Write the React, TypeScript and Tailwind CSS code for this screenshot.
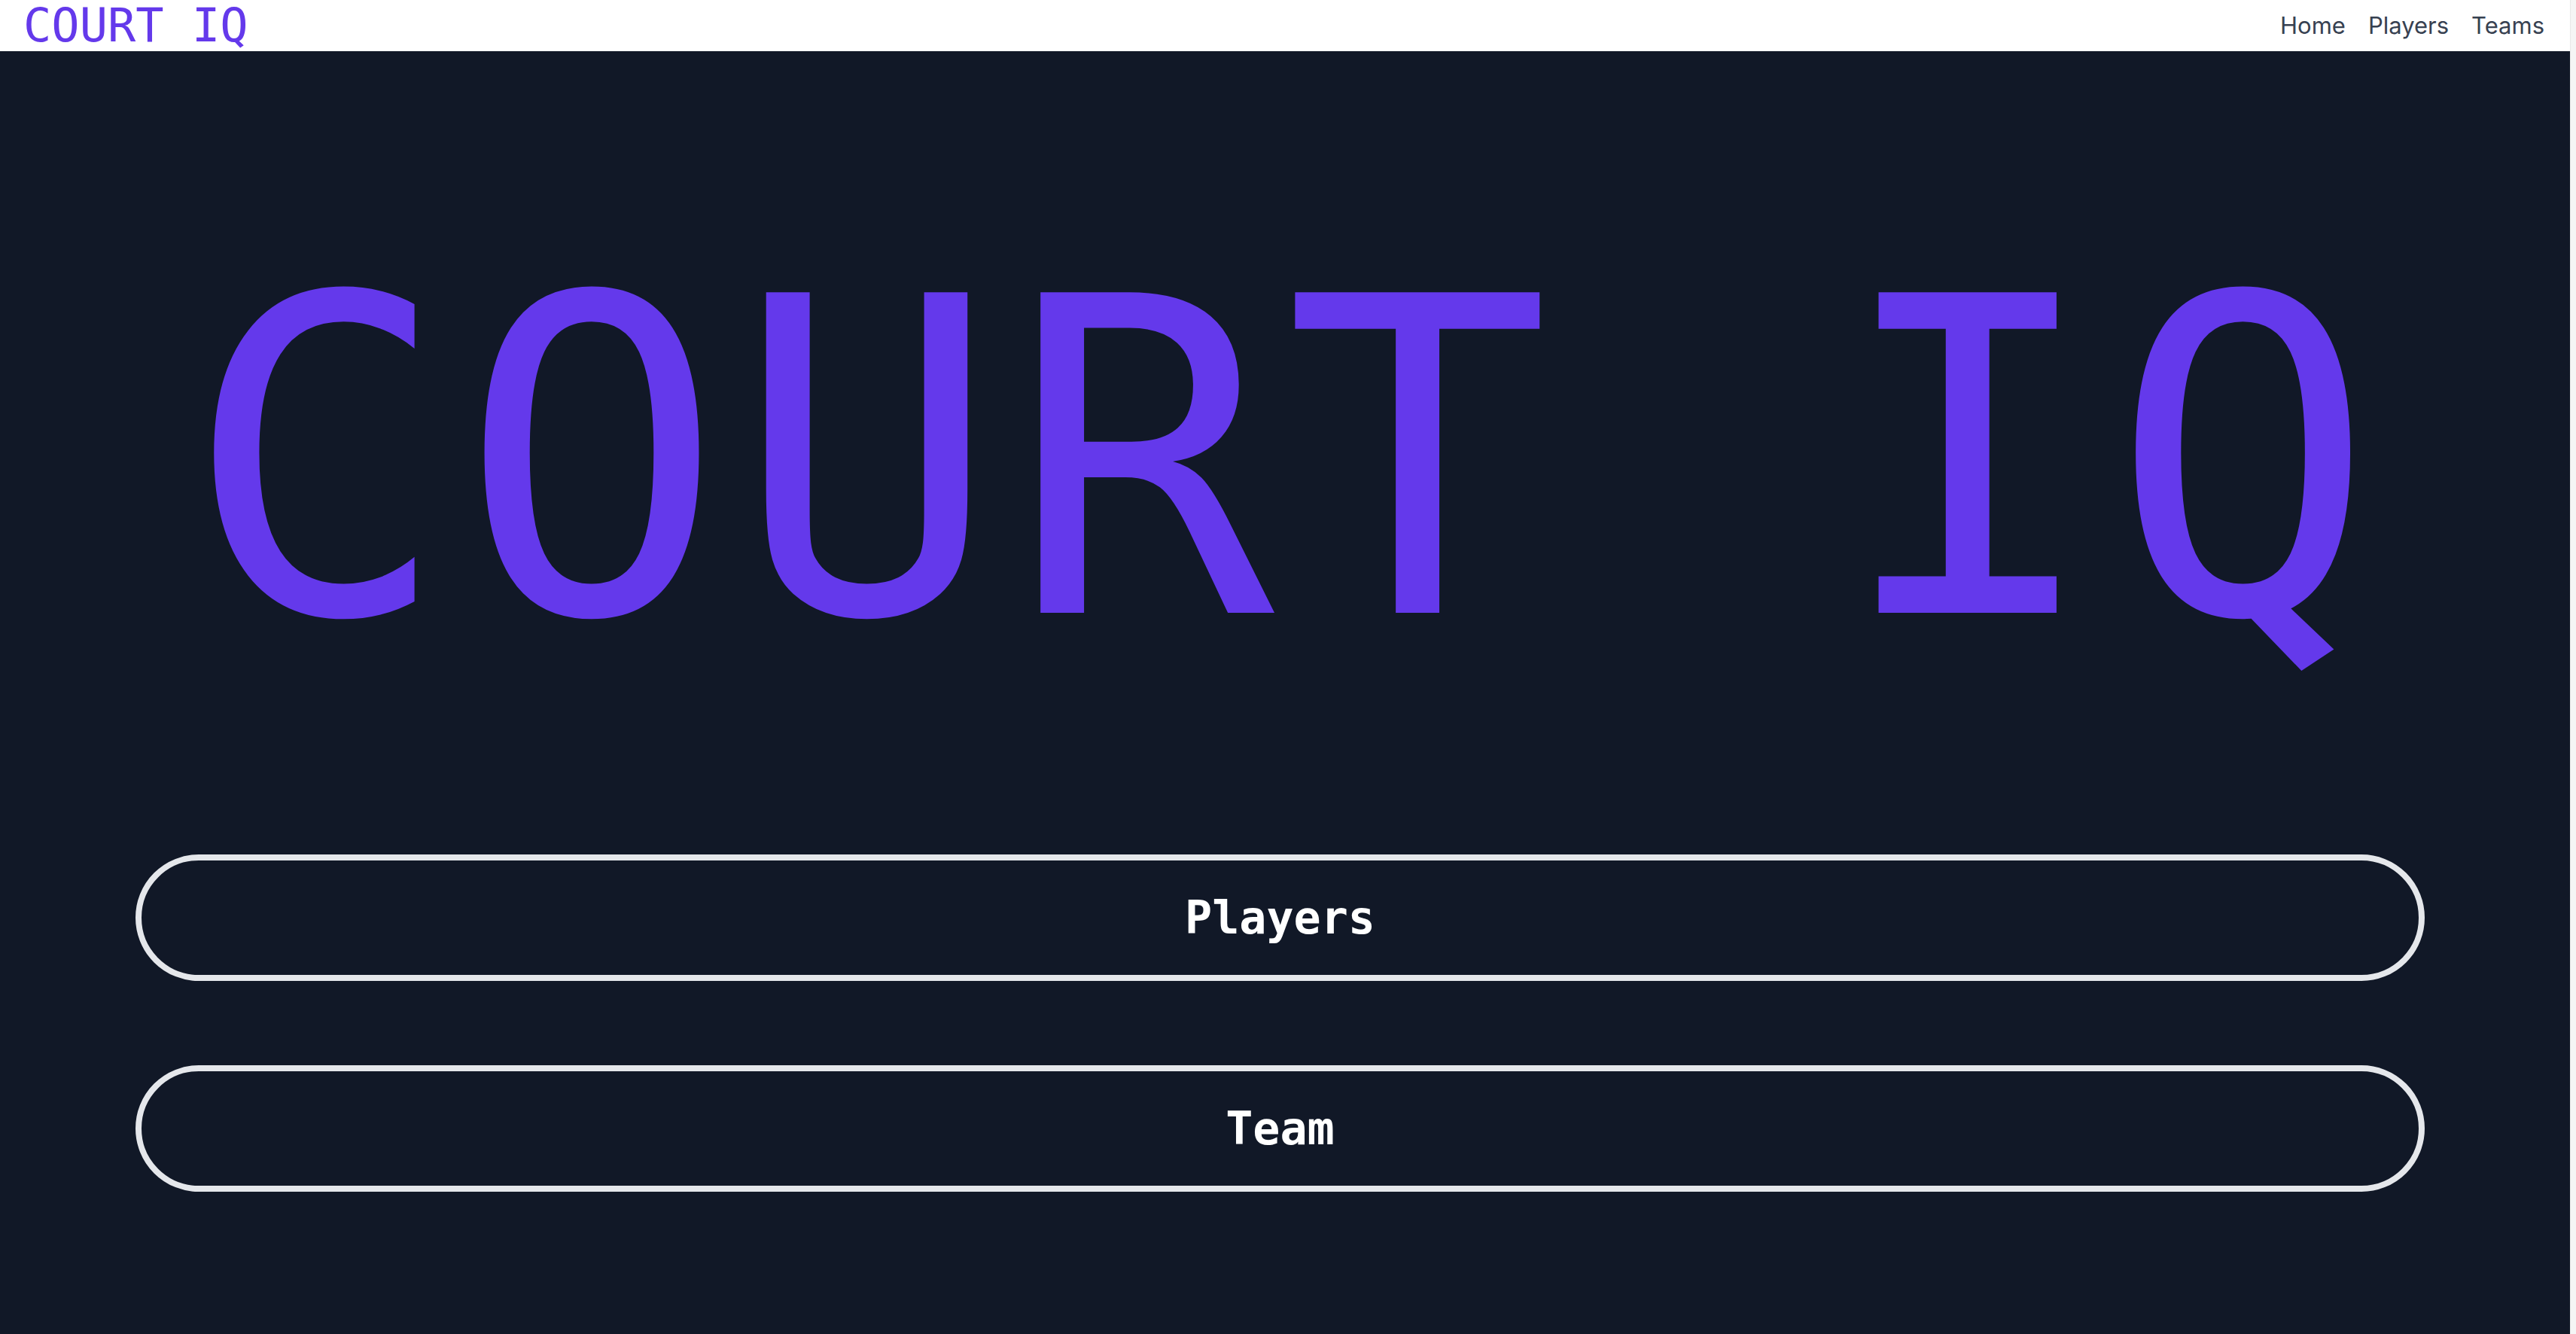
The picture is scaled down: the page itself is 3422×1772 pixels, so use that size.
import React from "react";

const navItems = ["Home", "Players", "Teams"];

const mono = "font-['DejaVu_Sans_Mono','Liberation_Mono',monospace]";

const Header = () => (
  <header className="h-[68px] bg-white flex items-center justify-between pl-[31px] pr-[34px]">
    <a href="#home" className={`${mono} text-[62px] leading-none text-[#6439eb]`}>
      COURT IQ
    </a>
    <nav className="flex items-center gap-[30px] font-['Inter','Noto_Sans',sans-serif] text-[31px] text-[#374151]">
      {navItems.map((item) => (
        <a key={item} href={`#${item.toLowerCase()}`}>
          {item}
        </a>
      ))}
    </nav>
  </header>
);

const BigButton = ({ label }: { label: string }) => (
  <button
    type="button"
    className={`${mono} h-[168px] w-full rounded-full border-[8px] border-[#e5e7eb] bg-transparent text-[60px] font-bold text-white`}
  >
    {label}
  </button>
);

export default function App() {
  return (
    <div className="flex min-h-screen bg-[#111827]">
      <div className="flex flex-1 flex-col">
        <Header />
        <main className="flex flex-col">
          {/* hero title */}
          <h1
            className={`${mono} pt-[252px] text-center text-[584px] leading-none tracking-[14px] text-[#6439eb]`}
          >
            COURT IQ
          </h1>
          <div className="mt-[231px] flex flex-col gap-[112px] pl-[180px] pr-[193px]">
            <BigButton label="Players" />
            <BigButton label="Team" />
          </div>
        </main>
      </div>
      {/* scrollbar track */}
      <div className="w-[8px] bg-[#f5f5f5] border-l border-[#e8e8e8]" />
    </div>
  );
}
